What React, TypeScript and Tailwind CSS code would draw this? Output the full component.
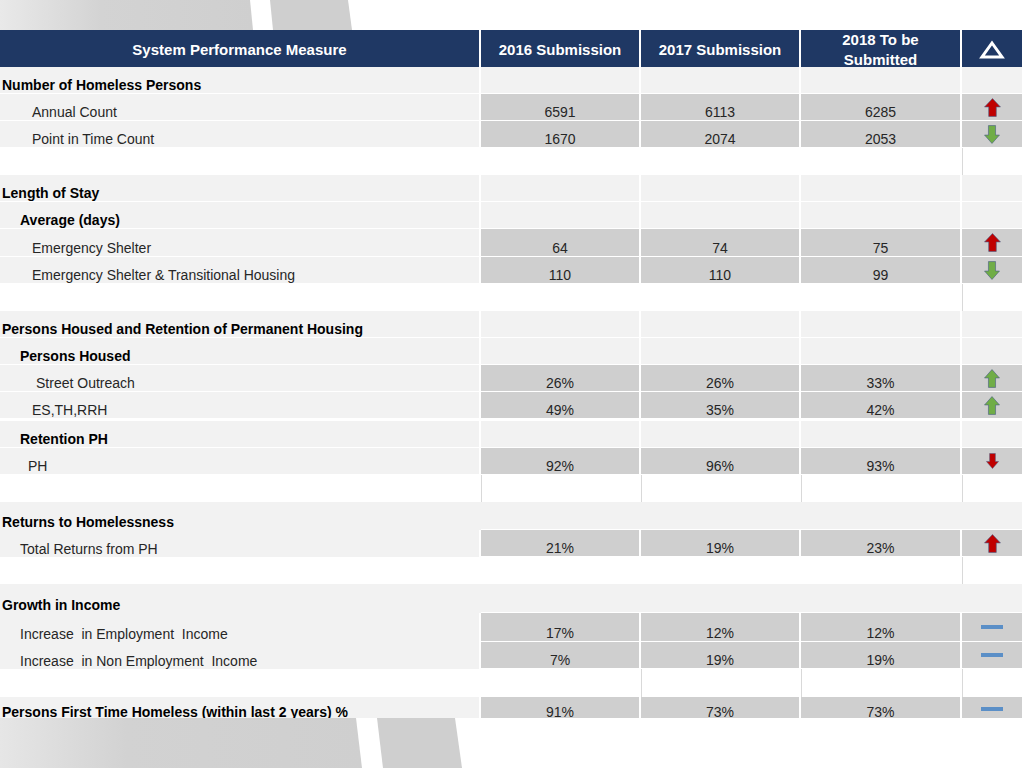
import React from "react";

type Trend = "upRed" | "downGreen" | "upGreen" | "downRed" | "flat";

type Row =
  | { t: "head"; h: string; label: string; pad: string; bold?: boolean }
  | { t: "data"; h: string; label: string; pad: string; bold?: boolean; vals: string[]; trend: Trend; sep?: string; noSep?: boolean }
  | { t: "blank"; h: string; lines: boolean[] }
  | { t: "merged"; h: string; label: string };

const rows: Row[] = [
  { t: "head", h: "h-[27px]", label: "Number of Homeless Persons", pad: "pl-[2px]", bold: true },
  { t: "data", h: "h-[27px]", label: "Annual Count", pad: "pl-[32px]", vals: ["6591", "6113", "6285"], trend: "upRed" },
  { t: "data", h: "h-[27px]", label: "Point in Time Count", pad: "pl-[32px]", vals: ["1670", "2074", "2053"], trend: "downGreen" },
  { t: "blank", h: "h-[27px]", lines: [false, false, false, false, true] },
  { t: "head", h: "h-[27px]", label: "Length of Stay", pad: "pl-[2px]", bold: true },
  { t: "head", h: "h-[27px]", label: "Average (days)", pad: "pl-[20px]", bold: true },
  { t: "data", h: "h-[28px]", label: "Emergency Shelter", pad: "pl-[32px]", vals: ["64", "74", "75"], trend: "upRed" },
  { t: "data", h: "h-[27px]", label: "Emergency Shelter & Transitional Housing", pad: "pl-[32px]", vals: ["110", "110", "99"], trend: "downGreen" },
  { t: "blank", h: "h-[27px]", lines: [false, false, false, false, true] },
  { t: "head", h: "h-[27px]", label: "Persons Housed and Retention of Permanent Housing", pad: "pl-[2px]", bold: true },
  { t: "head", h: "h-[27px]", label: "Persons Housed", pad: "pl-[20px]", bold: true },
  { t: "data", h: "h-[27px]", label: "Street Outreach", pad: "pl-[36px]", vals: ["26%", "26%", "33%"], trend: "upGreen" },
  { t: "data", h: "h-[29px]", label: "ES,TH,RRH", pad: "pl-[32px]", vals: ["49%", "35%", "42%"], trend: "upGreen", sep: "border-b-[3px]" },
  { t: "head", h: "h-[27px]", label: "Retention PH", pad: "pl-[20px]", bold: true },
  { t: "data", h: "h-[27px]", label: "PH", pad: "pl-[28px]", vals: ["92%", "96%", "93%"], trend: "downRed" },
  { t: "blank", h: "h-[27px]", lines: [false, true, true, true, true] },
  { t: "merged", h: "h-[28px]", label: "Returns to Homelessness" },
  { t: "data", h: "h-[27px]", label: "Total Returns from PH", pad: "pl-[20px]", vals: ["21%", "19%", "23%"], trend: "upRed", noSep: true },
  { t: "blank", h: "h-[27px]", lines: [false, false, false, false, true] },
  { t: "merged", h: "h-[29px]", label: "Growth in Income" },
  { t: "data", h: "h-[29px]", label: "Increase  in Employment  Income", pad: "pl-[20px]", vals: ["17%", "12%", "12%"], trend: "flat", noSep: true },
  { t: "data", h: "h-[27px]", label: "Increase  in Non Employment  Income", pad: "pl-[20px]", vals: ["7%", "19%", "19%"], trend: "flat", noSep: true },
  { t: "blank", h: "h-[28px]", lines: [false, false, true, true, true] },
  { t: "data", h: "h-[24px]", label: "Persons First Time Homeless (within last 2 years) %", pad: "pl-[2px]", bold: true, vals: ["91%", "73%", "73%"], trend: "flat" },
];

const GRID = "grid grid-cols-[479px_158px_158px_159px_60px] gap-x-[2px] w-[1022px]";

function BlockArrow({ up, fill, w, h }: { up: boolean; fill: string; w: number; h: number }) {
  const upPts = "9,0.6 17.4,9.4 13,9.4 13,19.4 5,19.4 5,9.4 0.6,9.4";
  const downPts = "5,0.6 13,0.6 13,10.6 17.4,10.6 9,19.4 0.6,10.6 5,10.6";
  return (
    <svg width={w} height={h} viewBox="0 0 18 20" preserveAspectRatio="none">
      <polygon points={up ? upPts : downPts} fill={fill} stroke="#4a5f86" strokeWidth="0.9" strokeOpacity="0.75" />
    </svg>
  );
}

function TrendIcon({ trend }: { trend: Trend }) {
  if (trend === "upRed") return <BlockArrow up fill="#c00000" w={17} h={19} />;
  if (trend === "downGreen") return <BlockArrow up={false} fill="#70ad47" w={16} h={19} />;
  if (trend === "upGreen") return <BlockArrow up fill="#70ad47" w={16} h={19} />;
  if (trend === "downRed") return <BlockArrow up={false} fill="#c00000" w={13} h={16} />;
  return <div className="w-[22px] h-[4px] bg-[#5b8fc7]" />;
}

function Header() {
  const cell = "bg-[#1f3864] flex items-center justify-center text-white font-bold text-[15px] text-center";
  return (
    <div className={`${GRID} h-[37px] border-b border-white shrink-0`}>
      <div className={cell}>System Performance Measure</div>
      <div className={cell}>2016 Submission</div>
      <div className={cell}>2017 Submission</div>
      <div className={`${cell} leading-5`}>
        2018 To be
        <br />
        Submitted
      </div>
      <div className={cell}>
        <svg width="26" height="20" viewBox="0 0 26 20">
          <polygon points="13,3 23,17 3,17" fill="none" stroke="white" strokeWidth="3" />
        </svg>
      </div>
    </div>
  );
}

function TableRow({ row }: { row: Row }) {
  if (row.t === "blank") {
    return (
      <div className={`${GRID} ${row.h} shrink-0`}>
        {row.lines.map((l, i) => (
          <div key={i} className={l ? "bg-white border-l border-[#d9d9d9]" : "bg-white"} />
        ))}
      </div>
    );
  }
  if (row.t === "merged") {
    return (
      <div className={`${GRID} ${row.h} shrink-0`}>
        <div className="col-span-5 flex bg-[#f2f2f2]">
          <div className="w-[481px] flex items-end pl-[2px] font-bold text-black">{row.label}</div>
          <div className="flex-1 border-b border-white" />
        </div>
      </div>
    );
  }
  const sep = row.t === "data" && row.sep ? row.sep : "border-b";
  const labelSep = row.t === "data" && row.noSep ? "" : `${sep} border-white`;
  const label = (
    <div
      className={`bg-[#f2f2f2] flex items-end whitespace-pre ${row.pad} ${labelSep} ${
        row.bold ? "font-bold text-black" : "text-[#262626]"
      }`}
    >
      {row.label}
    </div>
  );
  if (row.t === "head") {
    return (
      <div className={`${GRID} ${row.h} shrink-0`}>
        {label}
        <div className="bg-[#f2f2f2] border-b border-white" />
        <div className="bg-[#f2f2f2] border-b border-white" />
        <div className="bg-[#f2f2f2] border-b border-white" />
        <div className="bg-[#f2f2f2] border-b border-white" />
      </div>
    );
  }
  return (
    <div className={`${GRID} ${row.h} shrink-0`}>
      {label}
      {row.vals.map((v, i) => (
        <div key={i} className={`bg-[#cfcfcf] ${sep} border-white flex items-end justify-center text-[#262626]`}>
          {v}
        </div>
      ))}
      <div className={`bg-[#cfcfcf] ${sep} border-white flex items-center justify-center`}>
        <TrendIcon trend={row.trend} />
      </div>
    </div>
  );
}

export default function App() {
  return (
    <div className="w-[1024px] h-[768px] bg-white overflow-hidden flex flex-col font-['Liberation_Sans',Arial,sans-serif] text-[14px] leading-4">
      <svg width="1024" height="30" className="block shrink-0">
        <defs>
          <linearGradient id="bandTop" x1="0" x2="1" y1="0" y2="0">
            <stop offset="0" stopColor="#e9e9e9" />
            <stop offset="0.4" stopColor="#d3d3d3" />
            <stop offset="1" stopColor="#cfcfcf" />
          </linearGradient>
        </defs>
        <polygon points="0,0 250,0 253,30 0,30" fill="url(#bandTop)" />
        <polygon points="270,0 348,0 352,30 273,30" fill="#cfcfcf" />
      </svg>

      <div className="h-[688px] overflow-hidden flex flex-col shrink-0">
        <Header />
        {rows.map((r, i) => (
          <TableRow key={i} row={r} />
        ))}
      </div>

      <svg width="1024" height="50" className="block shrink-0">
        <defs>
          <linearGradient id="bandBottom" x1="0" x2="1" y1="0" y2="0">
            <stop offset="0" stopColor="#e6e6e6" />
            <stop offset="0.35" stopColor="#d2d2d2" />
            <stop offset="1" stopColor="#cfcfcf" />
          </linearGradient>
        </defs>
        <polygon points="0,0 356,0 362,50 0,50" fill="url(#bandBottom)" />
        <polygon points="377,0 455,0 462,50 383,50" fill="#cfcfcf" />
      </svg>
    </div>
  );
}
